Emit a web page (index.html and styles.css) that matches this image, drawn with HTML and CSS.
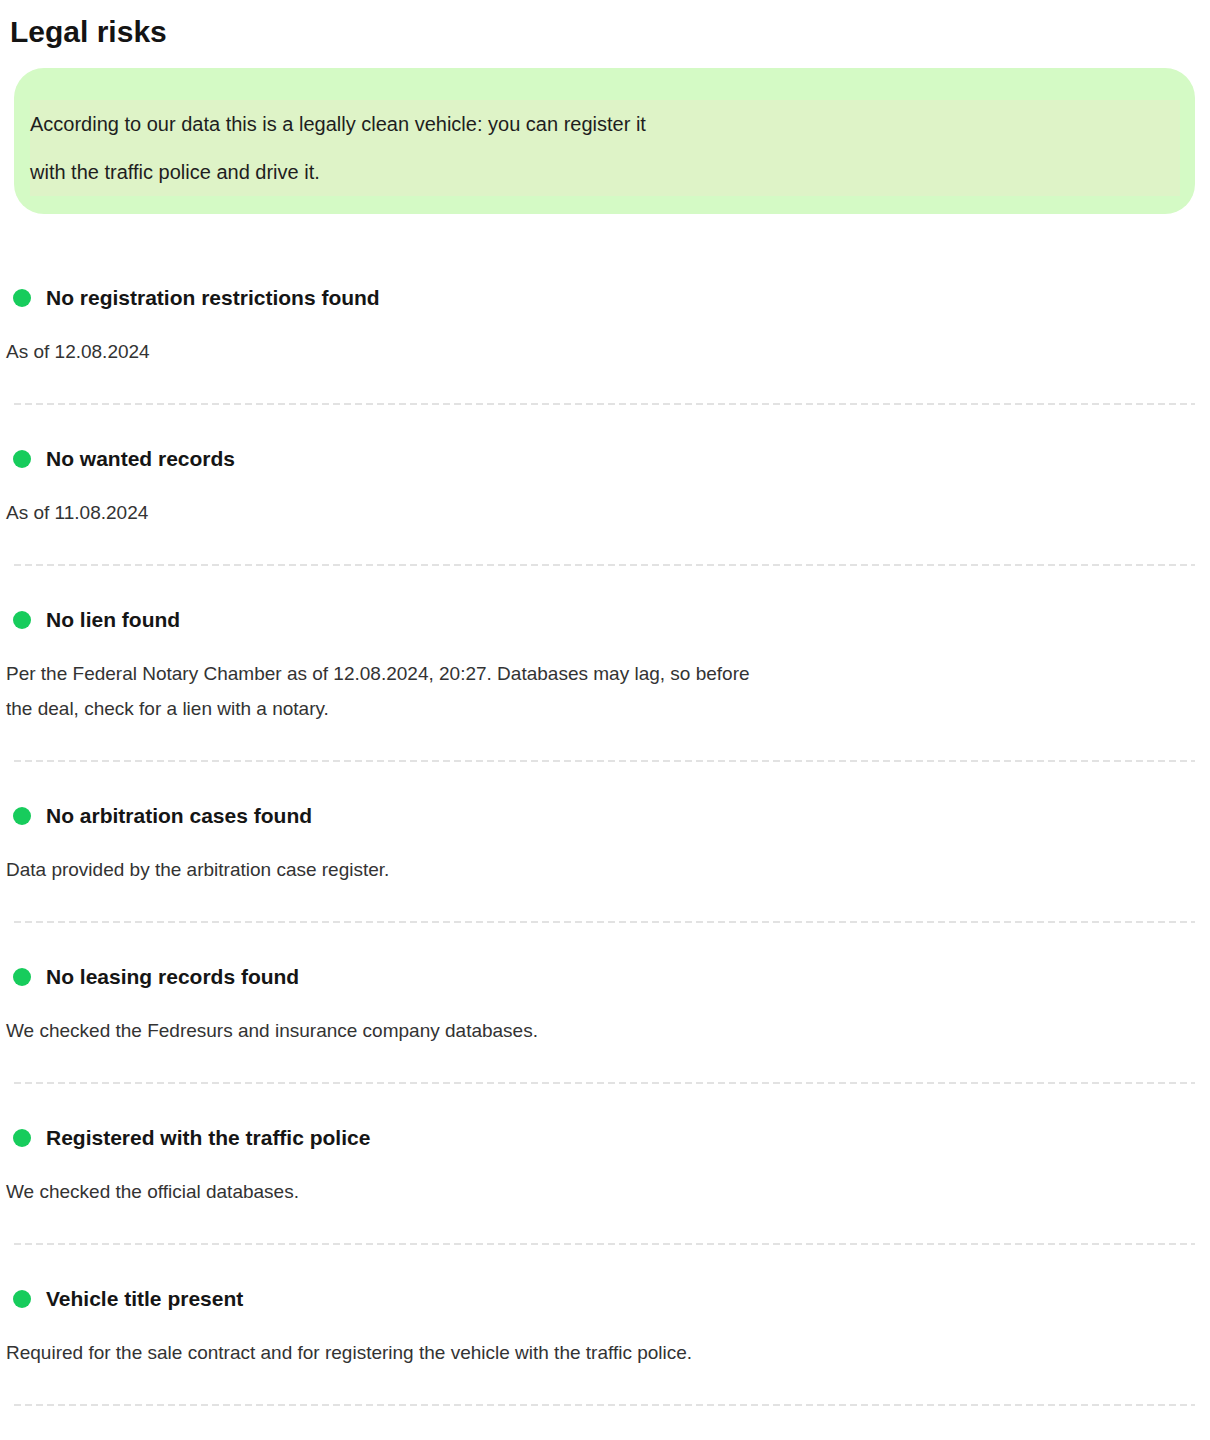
FILE: index.html
```html
<!DOCTYPE html>
<html lang="en">
<head>
<meta charset="utf-8">
<title>Legal risks</title>
<link rel="stylesheet" href="styles.css">
</head>
<body>
<main class="page">
  <h1 class="heading">Legal risks</h1>
  <section class="banner">
    <p class="banner-text"><span class="banner-line">According to our data this is a legally clean vehicle: you can register it with the traffic police and drive it.</span></p>
  </section>
  <ul class="checks">
    <li class="check">
      <div class="check-title"><span class="dot"></span>No registration restrictions found</div>
      <p class="check-desc">As of 12.08.2024</p>
    </li>
    <li class="check">
      <div class="check-title"><span class="dot"></span>No wanted records</div>
      <p class="check-desc">As of 11.08.2024</p>
    </li>
    <li class="check">
      <div class="check-title"><span class="dot"></span>No lien found</div>
      <p class="check-desc">Per the Federal Notary Chamber as of 12.08.2024, 20:27. Databases may lag, so before the deal, check for a lien with a notary.</p>
    </li>
    <li class="check">
      <div class="check-title"><span class="dot"></span>No arbitration cases found</div>
      <p class="check-desc">Data provided by the arbitration case register.</p>
    </li>
    <li class="check">
      <div class="check-title"><span class="dot"></span>No leasing records found</div>
      <p class="check-desc">We checked the Fedresurs and insurance company databases.</p>
    </li>
    <li class="check">
      <div class="check-title"><span class="dot"></span>Registered with the traffic police</div>
      <p class="check-desc">We checked the official databases.</p>
    </li>
    <li class="check">
      <div class="check-title"><span class="dot"></span>Vehicle title present</div>
      <p class="check-desc">Required for the sale contract and for registering the vehicle with the traffic police.</p>
    </li>
  </ul>
</main>
</body>
</html>
```
FILE: styles.css
```css
html, body {
  margin: 0;
  padding: 0;
  background: #ffffff;
}

body {
  font-family: "Liberation Sans", Arial, sans-serif;
  color: #1a1a1a;
}

.page {
  width: 1210px;
}

.heading {
  margin: 14px 0 18px;
  padding-left: 10px;
  font-size: 30px;
  line-height: 36px;
  font-weight: 700;
  color: #141414;
}

.banner {
  margin: 0 15px 0 14px;
  padding: 32px 15px 18px 16px;
  background: #d4fac5;
  border-radius: 30px;
}

.banner-text {
  margin: 0;
  background: #def3c7;
  font-size: 20px;
  line-height: 48px;
  color: #1e1e1e;
}

.banner-line {
  display: block;
  max-width: 650px;
}

.checks {
  list-style: none;
  margin: 30px 0 0;
  padding: 0;
}

.check {
  padding-top: 39px;
}

.check::after {
  content: "";
  display: block;
  height: 2px;
  margin: 34px 15px 0 14px;
  background: repeating-linear-gradient(90deg, #e2e2e2 0 7px, transparent 7px 11px);
}

.check-title {
  display: flex;
  align-items: center;
  gap: 15px;
  padding-left: 13px;
  font-size: 21px;
  line-height: 30px;
  font-weight: 700;
  color: #151515;
}

.dot {
  width: 18px;
  height: 18px;
  border-radius: 50%;
  background: #17cc5c;
  flex: none;
}

.check-desc {
  margin: 21px 0 0;
  padding-left: 6px;
  max-width: 770px;
  font-size: 19px;
  line-height: 35px;
  color: #333333;
}
```
